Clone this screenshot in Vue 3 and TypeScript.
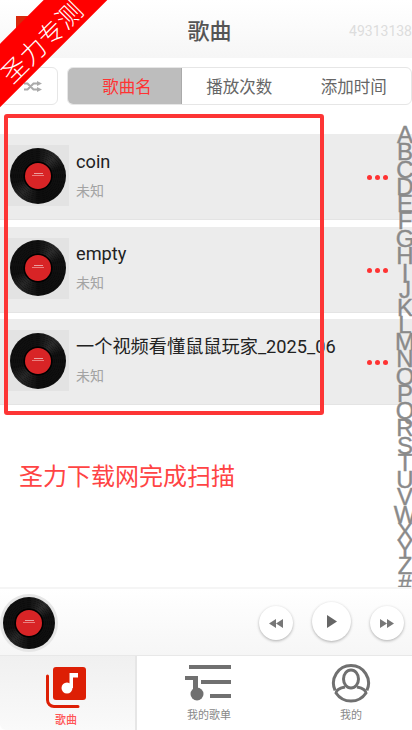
<script setup lang="ts">
const sortTabs = ['歌曲名', '播放次数', '添加时间'];
const songs = [
  { title: 'coin', artist: '未知' },
  { title: 'empty', artist: '未知' },
  { title: '一个视频看懂鼠鼠玩家_2025_06', artist: '未知' }
];
const letters = 'ABCDEFGHIJKLMNOPQRSTUVWXYZ#'.split('');
</script>

<template>
  <div class="page">
    <header class="header">
      <span class="back"></span>
      <h1 class="title">歌曲</h1>
      <span class="user-id">49313138</span>
    </header>

    <div class="toolbar">
      <button class="shuffle">
        <svg width="18" height="11" viewBox="0 0 18 11">
          <path d="M0 2.500h3.500l6 6H13M0 8.500h3.500l6-6H13" fill="none" stroke="#aaa" stroke-width="2" />
          <path d="M13 0l5 2.500L13 5zM13 6l5 2.500L13 11z" fill="#aaa" />
        </svg>
      </button>
      <div class="sort">
        <span v-for="(tab, i) in sortTabs" :key="tab" class="sort-tab" :class="{ active: i === 0 }">{{ tab }}</span>
      </div>
    </div>

    <main class="content">
      <ul class="songs">
        <li v-for="song in songs" :key="song.title" class="song">
          <div class="cover">
            <div class="disc"><div class="label"></div></div>
          </div>
          <div class="meta">
            <div class="song-title">{{ song.title }}</div>
            <div class="artist">{{ song.artist }}</div>
          </div>
          <div class="more"><i></i><i></i><i></i></div>
        </li>
      </ul>
      <p class="done">圣力下载网完成扫描</p>
      <div class="highlight"></div>
      <div class="letters">
        <span v-for="l in letters" :key="l">{{ l }}</span>
      </div>
    </main>

    <section class="player">
      <div class="now">
        <div class="disc small"><div class="label"></div></div>
      </div>
      <div class="controls">
        <button class="ctrl">
          <svg width="14" height="9" viewBox="0 0 14 9"><path d="M7 0v9L0 4.500zM14 0v9L7 4.500z" fill="#777" /></svg>
        </button>
        <button class="ctrl big">
          <svg width="10" height="13" viewBox="0 0 10 13"><path d="M0 0l10 6.500L0 13z" fill="#666" /></svg>
        </button>
        <button class="ctrl">
          <svg width="14" height="9" viewBox="0 0 14 9"><path d="M0 0v9l7-4.500zM7 0v9l7-4.500z" fill="#777" /></svg>
        </button>
      </div>
    </section>

    <nav class="tabbar">
      <div class="tab current">
        <svg width="40" height="41" viewBox="0 0 40 41">
          <rect x="7" y="0" width="33" height="33" rx="3" fill="#dd1f05" />
          <path d="M1.500 9v24a6.500 6.500 0 0 0 6.500 6.500h24" fill="none" stroke="#dd1f05" stroke-width="3" stroke-linecap="round" />
          <circle cx="21" cy="21" r="5.500" fill="#fff" />
          <path d="M23.500 21V6H32v4.500h-5V21z" fill="#fff" />
        </svg>
        <span>歌曲</span>
      </div>
      <div class="tab">
        <svg class="list-icon" width="46" height="37" viewBox="0 0 46 37" fill="#707070">
          <path d="M4 1h42v4H4zM0 12h13v18H8V16H0zM16 16h30v4H16zM25 30h21v4H25z" />
          <circle cx="12" cy="30" r="6.500" />
        </svg>
        <span>我的歌单</span>
      </div>
      <div class="tab">
        <svg width="40" height="39" viewBox="0 0 40 39" fill="none" stroke="#707070" stroke-width="3">
          <path d="M4.100 26.400A17.500 17.500 0 1 1 35.900 26.400" />
          <ellipse cx="20" cy="15" rx="7.500" ry="9" />
          <path d="M14 23C9 24 5 26 5 29C9 35 15 37 20 37C25 37 31 35 35 29C35 26 31 24 26 23" />
        </svg>
        <span>我的</span>
      </div>
    </nav>

    <div class="ribbon"><span>圣力专测</span></div>
  </div>
</template>

<style>
html,
body {
  margin: 0;
  background: #fff;
}
</style>

<style scoped>
.page {
  position: relative;
  width: 412px;
  height: 730px;
  overflow: hidden;
  display: flex;
  flex-direction: column;
  background: #fff;
  font-family: Roboto, "Noto Sans CJK SC", sans-serif;
}

.header {
  position: relative;
  flex: none;
  height: 58px;
  display: flex;
  align-items: center;
  justify-content: center;
  padding-left: 7px;
  box-sizing: border-box;
  background: linear-gradient(#fff, #f6f6f6);
}

.back {
  position: absolute;
  left: 16px;
  top: 16px;
  width: 20px;
  height: 20px;
  background: #d8280c;
}

.title {
  margin: -1px 0 0;
  font-size: 22px;
  font-weight: 500;
  color: #555;
}

.user-id {
  position: absolute;
  right: 0;
  top: 23px;
  font-size: 14px;
  color: #ddd;
}

.toolbar {
  flex: none;
  display: flex;
  gap: 9px;
  height: 38px;
  margin-top: 9px;
  padding-bottom: 2px;
}

.shuffle {
  width: 58px;
  height: 38px;
  padding: 0 0 0 23px;
  border: 1px solid #e6e6e6;
  border-radius: 6px;
  background: #fff;
  box-sizing: border-box;
  display: flex;
  align-items: center;
}

.sort {
  flex: 1;
  display: flex;
  border: 1px solid #e6e6e6;
  border-radius: 6px;
  overflow: hidden;
}

.sort-tab {
  flex: 1;
  display: flex;
  align-items: center;
  justify-content: center;
  font-size: 16.5px;
  color: #666;
}

.sort-tab.active {
  flex: none;
  width: 114px;
  padding-left: 5px;
  color: #f33;
  background: #bdbdbd;
  border-right: 1px solid #aaa;
  box-sizing: border-box;
}

.content {
  position: relative;
  flex: 1;
  min-height: 0;
}

.songs {
  list-style: none;
  margin: 0;
  padding: 27px 0 0;
  display: flex;
  flex-direction: column;
  gap: 6.5px;
}

.song {
  height: 86px;
  box-sizing: border-box;
  display: flex;
  align-items: center;
  padding-left: 8px;
  background: #ececec;
  border-bottom: 1px solid #e4e4e4;
}

.cover {
  width: 61px;
  height: 61px;
  flex: none;
  display: flex;
  align-items: center;
  background: #e3e3e3;
  margin-top: -2px;
}

.disc {
  position: relative;
  width: 56px;
  height: 56px;
  margin-left: 2px;
  border-radius: 50%;
  display: flex;
  align-items: center;
  justify-content: center;
  background:
    repeating-radial-gradient(circle, rgba(0, 0, 0, 0.25) 0 0.6px, transparent 0.6px 2px),
    conic-gradient(#101010, #2c2c2c 40deg, #101010 70deg, #0d0d0d 180deg, #282828 222deg, #0f0f0f 255deg, #101010);
}

.disc.small {
  width: 52px;
  height: 52px;
  margin-left: 0;
}

.label {
  width: 26px;
  height: 26px;
  border-radius: 50%;
  box-shadow: 0 0 0 1.5px #000;
  background:
    linear-gradient(#e9a0a0, #e9a0a0) center 10px / 9px 1px no-repeat,
    linear-gradient(#e98080, #e98080) center 12px / 12px 1px no-repeat,
    #d82426;
}

.meta {
  margin-left: 7px;
  margin-top: -3px;
  flex: 1;
  white-space: nowrap;
}

.song-title {
  font-size: 18.2px;
  line-height: 22px;
  color: #222;
}

.artist {
  margin-top: 9px;
  font-size: 14px;
  line-height: 18px;
  color: #a3a3a3;
}

.more {
  display: flex;
  gap: 3px;
  margin: 2px 24px 0 0;
}

.more i {
  width: 5px;
  height: 5px;
  border-radius: 50%;
  background: #f33;
}

.done {
  margin: 60px 0 0 19px;
  font-size: 24px;
  line-height: 24px;
  color: #f44;
}

.highlight {
  position: absolute;
  left: 4px;
  top: 7px;
  width: 320px;
  height: 301px;
  box-sizing: border-box;
  border: 4px solid #fd3535;
  border-radius: 3px;
}

.letters {
  position: absolute;
  right: 0;
  top: 19px;
  width: 14px;
  display: flex;
  flex-direction: column;
  align-items: center;
  font-family: "Liberation Sans", sans-serif;
  font-size: 24px;
  line-height: 17.25px;
  color: #8a8a8a;
  -webkit-text-stroke: 0.4px #8a8a8a;
}

.player {
  position: relative;
  z-index: 1;
  flex: none;
  height: 69px;
  box-sizing: border-box;
  display: flex;
  align-items: center;
  justify-content: space-between;
  padding-right: 8px;
  border-top: 2px solid #f5f5f5;
  border-bottom: 1px solid #e8e8e8;
  background: linear-gradient(#fff, #f6f6f6);
}

.now {
  margin-top: 1px;
  padding: 3px;
  border-radius: 50%;
  background: #e6e6e6;
  display: flex;
}

.controls {
  display: flex;
  align-items: center;
  gap: 19px;
}

.ctrl {
  width: 34px;
  height: 34px;
  padding: 0;
  border: none;
  border-radius: 50%;
  background: #fff;
  box-shadow: 0 1px 3px rgba(0, 0, 0, 0.3);
  display: flex;
  align-items: center;
  justify-content: center;
  margin-top: 2px;
}

.ctrl.big {
  width: 39px;
  height: 39px;
  margin-top: -1px;
}

.tabbar {
  flex: none;
  height: 74px;
  display: grid;
  grid-template-columns: 137px 144px 1fr;
  background: #fff;
}

.tab {
  display: flex;
  flex-direction: column;
  align-items: center;
  padding-top: 8px;
  box-sizing: border-box;
  font-size: 11px;
  line-height: 14px;
  color: #888;
  gap: 8px;
}

.tab:last-child {
  padding-left: 9px;
  gap: 6px;
}

.list-icon {
  margin-left: -2px;
}

.tab.current {
  padding: 11px 3px 0 0;
  gap: 6px;
  color: #f55;
  font-weight: 500;
  background: linear-gradient(#f0f0f0, #fafafa);
  border-right: 2px solid #e6e6e6;
  border-bottom-left-radius: 6px;
}

.ribbon {
  position: absolute;
  left: -62px;
  top: 10px;
  width: 210px;
  height: 45px;
  box-sizing: border-box;
  padding: 8px 15px 0 0;
  display: flex;
  align-items: center;
  justify-content: center;
  background: #f00;
  color: #fff;
  font-size: 25.500px;
  font-weight: 300;
  letter-spacing: 0.2px;
  transform: rotate(-45deg);
}
</style>
